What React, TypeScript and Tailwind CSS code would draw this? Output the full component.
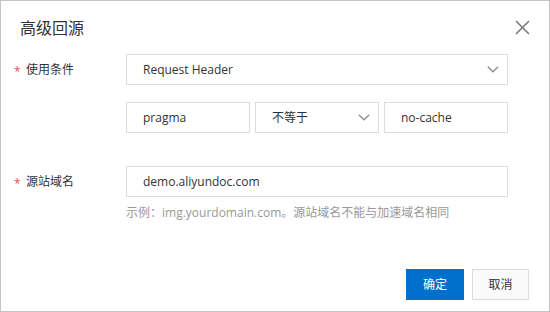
import React from 'react';

const font = { fontFamily: '"Open Sans", "Noto Sans CJK SC", sans-serif' };

function Chevron() {
  return (
    <svg width="12" height="7" viewBox="0 0 12 7" fill="none">
      <polyline points="0.8,0.8 6,5.8 11.2,0.8" stroke="#8a8a8a" strokeWidth="1.2" />
    </svg>
  );
}

function Label({ text }: { text: string }) {
  return (
    <div className="w-[112px] flex items-center text-[12px] text-[#333]">
      <span className="text-[#e5534b] text-[12px] w-[12px] leading-none pt-[4px]">*</span>
      <span>{text}</span>
    </div>
  );
}

function Box({ children, className = '' }: { children: React.ReactNode; className?: string }) {
  return (
    <div
      className={`h-[31px] border border-[#dcdcdc] flex items-center justify-between pl-4 pr-[8px] text-[12px] text-[#333] ${className}`}
    >
      {children}
    </div>
  );
}

export default function App() {
  return (
    <div style={font} className="w-[550px] h-[312px] bg-white border border-[#c4c4c4] flex flex-col">
      <div className="flex items-center justify-between h-[52px] pl-[19px] pr-[19px] pt-[1px]">
        <span className="text-[16px] text-[#333] leading-6">高级回源</span>
        <svg width="15" height="15" viewBox="0 0 15 15" fill="none">
          <path d="M1 1 L14 14 M14 1 L1 14" stroke="#7a7a7a" strokeWidth="1.6" />
        </svg>
      </div>

      <div className="pl-[13px]">
        <div className="flex h-[31px] mt-[1px]">
          <Label text="使用条件" />
          <Box className="w-[382px]">
            <span>Request Header</span>
            <Chevron />
          </Box>
        </div>

        <div className="flex h-[31px] mt-[17px]">
          <div className="w-[112px]" />
          <div className="flex gap-[5px] w-[382px]">
            <Box className="flex-1">
              <span>pragma</span>
            </Box>
            <Box className="flex-1">
              <span>不等于</span>
              <Chevron />
            </Box>
            <Box className="flex-1">
              <span>no-cache</span>
            </Box>
          </div>
        </div>

        <div className="flex h-[31px] mt-[33px]">
          <Label text="源站域名" />
          <Box className="w-[382px]">
            <span>demo.aliyundoc.com</span>
          </Box>
        </div>

        <div className="flex mt-[7px]">
          <div className="w-[112px]" />
          <span className="text-[12px] text-[#999] leading-[18px]">
            示例：img.yourdomain.com。源站域名不能与加速域名相同
          </span>
        </div>
      </div>

      <div className="flex justify-end gap-2 mt-auto mb-[11px] pr-5">
        <button className="w-[58px] h-[31px] bg-[#0070cc] text-white text-[12px]">确定</button>
        <button className="w-[57px] h-[31px] bg-[#fafafa] border border-[#dcdcdc] text-[#333] text-[12px]">
          取消
        </button>
      </div>
    </div>
  );
}
